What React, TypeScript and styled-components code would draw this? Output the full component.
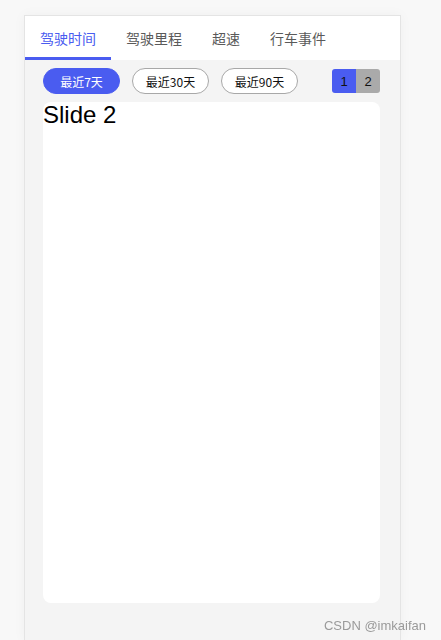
import React, { useState } from "react";
import styled, { createGlobalStyle } from "styled-components";

const Global = createGlobalStyle`
  html, body { margin: 0; padding: 0; background: #f8f8f8; }
  body { font-family: "Microsoft YaHei", "Noto Sans CJK SC", "Liberation Sans", sans-serif; overflow: hidden; }
`;

const Panel = styled.div`
  margin: 15px 0 0 24px;
  width: 377px;
  min-height: 625px;
  box-sizing: border-box;
  border: 1px solid #e4e4e4;
  border-bottom: none;
  background: #f4f4f4;
  box-shadow: 0 0 12px rgba(0, 0, 0, 0.04);
  display: flex;
  flex-direction: column;
`;

const TabBar = styled.div`
  display: flex;
  height: 44px;
  background: #fff;
`;

const Tab = styled.div<{ $active?: boolean }>`
  padding: 0 15px;
  height: 44px;
  box-sizing: border-box;
  line-height: 44px;
  font-size: 14px;
  color: ${(p) => (p.$active ? "#4a5cf0" : "#5a5a5a")};
  border-bottom: 3px solid ${(p) => (p.$active ? "#4a5cf0" : "transparent")};
  cursor: pointer;
`;

const Body = styled.div`
  padding: 8px 20px 0 18px;
  display: flex;
  flex-direction: column;
`;

const Toolbar = styled.div`
  display: flex;
  align-items: center;
  gap: 12px;
  height: 26px;
`;

const RangeButton = styled.div<{ $active?: boolean }>`
  width: 77px;
  height: 26px;
  box-sizing: border-box;
  border-radius: 13px;
  border: 1px solid ${(p) => (p.$active ? "#4a5cf0" : "#a8a8a8")};
  background: ${(p) => (p.$active ? "#4a5cf0" : "#fff")};
  color: ${(p) => (p.$active ? "#fff" : "#111")};
  font-size: 12px;
  display: flex;
  align-items: center;
  justify-content: center;
`;

const Pager = styled.div`
  margin-left: auto;
  display: flex;
  height: 24px;
  border-radius: 3px;
  overflow: hidden;
`;

const PageItem = styled.div<{ $active?: boolean }>`
  width: 24px;
  height: 24px;
  display: flex;
  align-items: center;
  justify-content: center;
  font-family: "Liberation Sans", Arial, sans-serif;
  font-size: 13px;
  color: #111;
  background: ${(p) => (p.$active ? "#4a5cf0" : "#aaaaaa")};
`;

const Card = styled.div`
  margin-top: 8px;
  height: 501px;
  background: #fff;
  border-radius: 8px;
`;

const SlideTitle = styled.div`
  font-family: "Liberation Sans", Arial, sans-serif;
  font-size: 24px;
  color: #000;
  line-height: 24px;
  padding-top: 1px;
`;

const Watermark = styled.div`
  position: fixed;
  right: 15px;
  bottom: 7px;
  font-family: "Liberation Sans", Arial, sans-serif;
  font-size: 13px;
  color: #9a9a9a;
`;

export default function App() {
  const [tab, setTab] = useState(0);
  const [range, setRange] = useState(0);
  const tabs = ["驾驶时间", "驾驶里程", "超速", "行车事件"];
  const ranges = ["最近7天", "最近30天", "最近90天"];
  return (
    <>
      <Global />
      <Panel>
        <TabBar>
          {tabs.map((t, i) => (
            <Tab key={t} $active={i === tab} onClick={() => setTab(i)}>
              {t}
            </Tab>
          ))}
        </TabBar>
        <Body>
          <Toolbar>
            {ranges.map((r, i) => (
              <RangeButton key={r} $active={i === range} onClick={() => setRange(i)}>
                {r}
              </RangeButton>
            ))}
            <Pager>
              <PageItem $active>1</PageItem>
              <PageItem>2</PageItem>
            </Pager>
          </Toolbar>
          <Card>
            <SlideTitle>Slide 2</SlideTitle>
          </Card>
        </Body>
      </Panel>
      <Watermark>CSDN @imkaifan</Watermark>
    </>
  );
}
